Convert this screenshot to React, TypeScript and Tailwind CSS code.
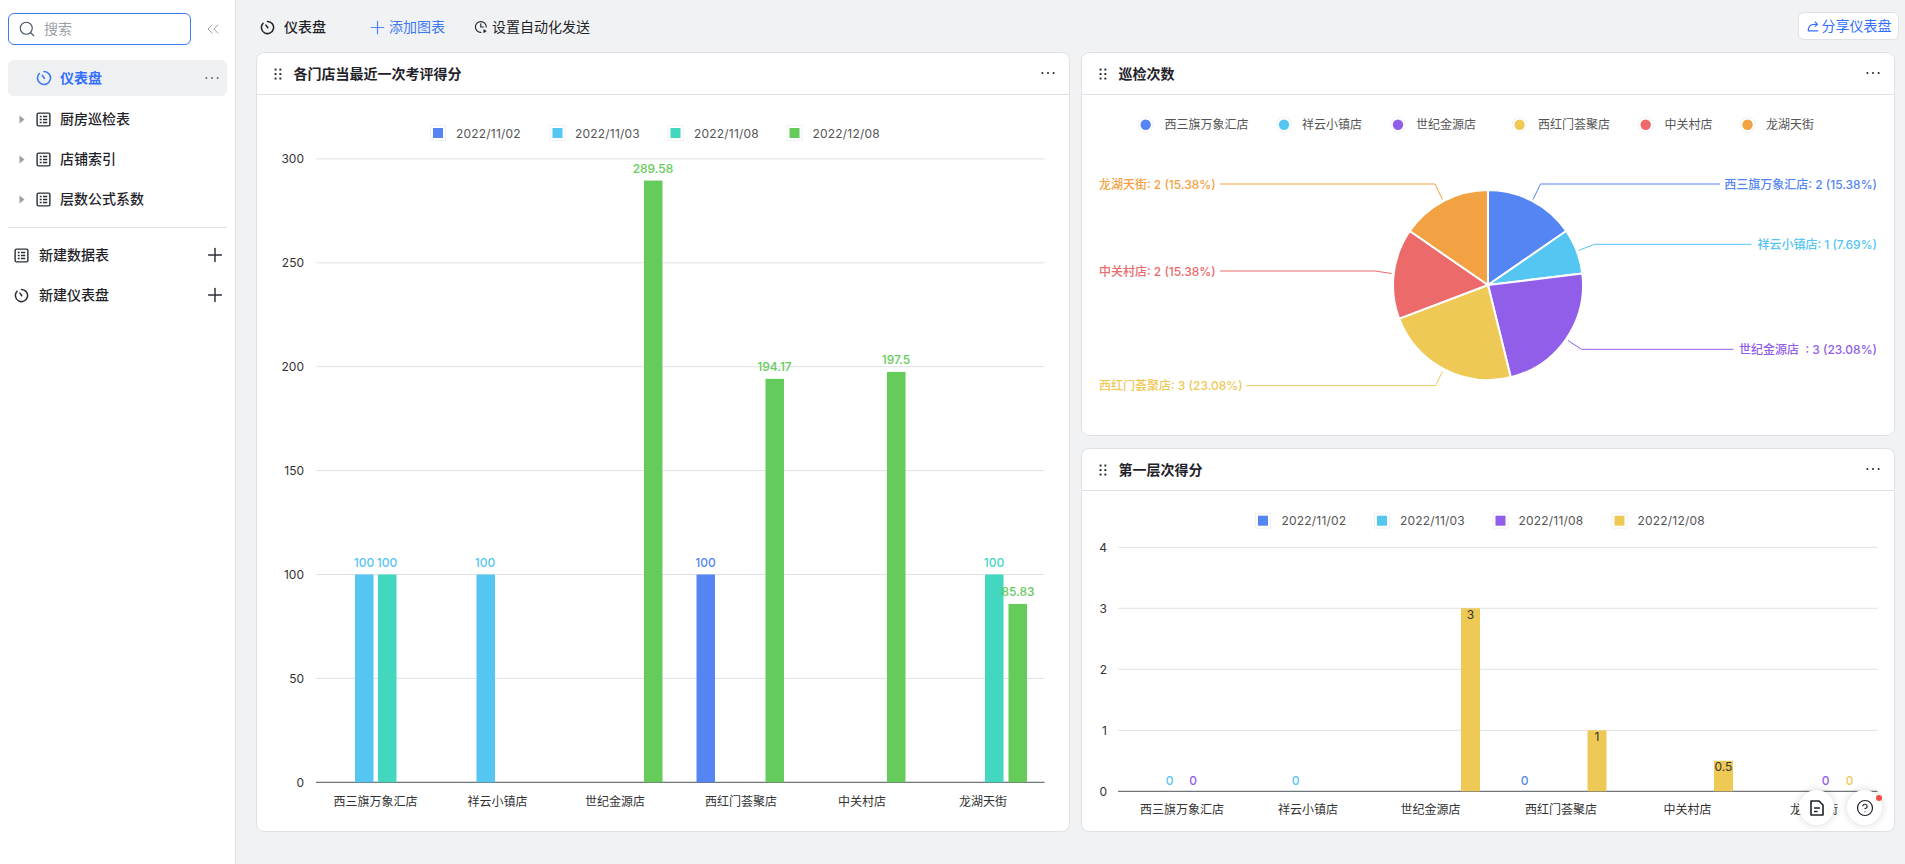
import { ChevronsLeft, CircleHelp, Plus, Search } from 'lucide-react';

const C = {
  blue: '#5585f2',
  cyan: '#55c5f2',
  teal: '#43d7bf',
  green: '#65cb5b',
  purple: '#905ee9',
  yellow: '#eec956',
  red: '#ec6a6a',
  orange: '#f3a243',
};

const LIGHT = '#dfe1e5';

function DashIcon({ className }: { className?: string }) {
  return (
    <svg viewBox="0 0 16 16" fill="none" stroke="currentColor" strokeWidth="1.6" strokeLinecap="round" className={className}>
      <path d="M8 1.5a6.5 6.5 0 1 1-4.7 2" />
      <path d="M8.3 8.3 6.3 5.4" />
    </svg>
  );
}

function TableIcon({ className }: { className?: string }) {
  return (
    <svg viewBox="0 0 16 16" fill="none" stroke="currentColor" className={className}>
      <rect x="1.2" y="1.2" width="13.6" height="13.6" rx="1.5" strokeWidth="1.5" />
      <path d="M4 4.9h2M7.5 4.9H12M4 8h2M7.5 8H12M4 11.1h2M7.5 11.1H12" strokeWidth="1.6" />
    </svg>
  );
}

function Caret() {
  return (
    <svg viewBox="0 0 6 9" className="w-[6px] h-[9px] text-[#9aa0a8]" fill="currentColor">
      <path d="M.5.5 5.5 4.5.5 8.5z" />
    </svg>
  );
}

function Dots({ className }: { className?: string }) {
  return (
    <svg viewBox="0 0 16 4" className={className} fill="currentColor">
      <circle cx="2.4" cy="2" r="1" />
      <circle cx="8" cy="2" r="1" />
      <circle cx="13.6" cy="2" r="1" />
    </svg>
  );
}

function Drag() {
  return (
    <svg viewBox="0 0 8 12" className="w-[8px] h-[12px] text-[#1f2329]" fill="currentColor">
      {[1.5, 6, 10.5].map((y) => (
        <g key={y}>
          <rect x="0.6" y={y - 0.9} width="1.9" height="1.9" />
          <rect x="5.4" y={y - 0.9} width="1.9" height="1.9" />
        </g>
      ))}
    </svg>
  );
}

function TreeRow({ label }: { label: string }) {
  return (
    <div className="h-9 mx-2 flex items-center">
      <div className="w-[28px] flex justify-end pr-[11px]"><Caret /></div>
      <TableIcon className="w-[15px] h-[15px] text-[#2b2f36]" />
      <span className="ml-[9px] text-sm font-medium text-[#1f2329]">{label}</span>
    </div>
  );
}

function NewRow({ label, icon }: { label: string; icon: React.ReactNode }) {
  return (
    <div className="h-9 mx-2 pl-[6px] pr-[1px] flex items-center">
      {icon}
      <span className="ml-[10px] text-sm font-medium text-[#1f2329]">{label}</span>
      <Plus className="ml-auto w-[22px] h-[22px] text-[#2b2f36]" strokeWidth={1.6} />
    </div>
  );
}

function Sidebar() {
  return (
    <aside className="w-[236px] shrink-0 bg-white border-r border-[#dfe1e5] flex flex-col">
      <div className="flex items-center mt-[13px] ml-2">
        <div className="w-[183px] h-[32px] rounded-md border border-[#3d78f5] flex items-center pl-[9px] gap-[8px]">
          <Search className="w-[18px] h-[18px] text-[#4e5969]" strokeWidth={1.5} />
          <span className="text-sm text-[#9aa0a8]">搜索</span>
        </div>
        <ChevronsLeft className="ml-[12px] w-[20px] h-[20px] text-[#9aa0a8]" strokeWidth={1.2} />
      </div>
      <div className="mt-[15px] flex flex-col gap-1">
        <div className="h-9 mx-2 mb-[1px] rounded-md bg-[#eff0f1] flex items-center pl-[28px] pr-[7px]">
          <DashIcon className="w-[16px] h-[16px] text-[#3d78f5]" />
          <span className="ml-[8px] text-sm font-semibold text-[#3370ff]">仪表盘</span>
          <Dots className="ml-auto w-[16px] h-[4px] text-[#646a73]" />
        </div>
        <TreeRow label="厨房巡检表" />
        <TreeRow label="店铺索引" />
        <TreeRow label="层数公式系数" />
      </div>
      <div className="mx-2 mt-[10px] mb-[9px] border-t border-[#dfe1e5]" />
      <div className="flex flex-col gap-1">
        <NewRow label="新建数据表" icon={<TableIcon className="w-[15px] h-[15px] text-[#2b2f36]" />} />
        <NewRow label="新建仪表盘" icon={<DashIcon className="w-[15px] h-[15px] text-[#2b2f36]" />} />
      </div>
    </aside>
  );
}

function Toolbar() {
  return (
    <div className="h-[52px] shrink-0 flex items-center pt-[2px] pl-[3px] text-sm">
      <DashIcon className="w-[15px] h-[15px] text-[#1f2329]" />
      <span className="ml-[9px] font-medium text-[#1f2329]">仪表盘</span>
      <Plus className="ml-[41px] w-[21px] h-[21px] text-[#4f86f7]" strokeWidth={1.4} />
      <span className="ml-[1px] text-[#3d78f5]">添加图表</span>
      <svg viewBox="0 0 16 16" fill="none" stroke="#1f2329" strokeWidth="1.3" strokeLinecap="round" className="ml-[29px] w-[14px] h-[14px]">
        <path d="M14 8a6.2 6.2 0 1 0-6.2 6.2" />
        <path d="M7.8 4.5V8h2.8" />
        <path d="M10.8 10.6 14.6 12.6 10.8 15z" fill="#1f2329" stroke="none" />
      </svg>
      <span className="ml-[4px] text-[#1f2329]">设置自动化发送</span>
      <button className="ml-auto mr-[-4px] mb-[2px] w-[101px] h-[28px] rounded-md border border-[#dfe1e5] bg-white flex items-center justify-center gap-[2px] text-[#3370ff]">
        <svg viewBox="0 0 16 16" fill="none" stroke="currentColor" strokeWidth="1.3" strokeLinecap="round" strokeLinejoin="round" className="w-[14px] h-[14px]">
          <path d="M13.5 13.5H2.5c.2-4.4 2.6-7.4 7-7.4h3.2" />
          <path d="M10.6 3.4l2.4 2.7-2.4 2.4" />
        </svg>
        分享仪表盘
      </button>
    </div>
  );
}

function Card({ title, children, className }: { title: string; children: React.ReactNode; className?: string }) {
  return (
    <section className={`bg-white border border-[#dfe1e5] rounded-lg flex flex-col overflow-hidden ${className ?? ''}`}>
      <header className="h-[42px] shrink-0 border-b border-[#dfe1e5] flex items-center pl-[16.5px] pr-[13px]">
        <Drag />
        <h3 className="ml-[12px] text-sm font-semibold text-[#1f2329]">{title}</h3>
        <Dots className="ml-auto w-[16px] h-[4px] text-[#1f2329] mb-[2px]" />
      </header>
      {children}
    </section>
  );
}

// chart helpers, coordinates are page pixels (the svg viewBox starts where the card body starts)
function T({ x, y, fill = '#333', anchor = 'middle', weight = 400, spacing, children }: { x: number; y: number; fill?: string; anchor?: 'start' | 'middle' | 'end'; weight?: number; spacing?: number; children: React.ReactNode }) {
  return (
    <text x={x} y={y} fill={fill} textAnchor={anchor} dominantBaseline="central" fontSize={12} fontWeight={weight} letterSpacing={spacing}>
      {children}
    </text>
  );
}

function Swatch({ x, y, color, label, tx }: { x: number; y: number; color: string; label: string; tx: number }) {
  return (
    <g>
      <rect x={x - 7.5} y={y - 7.5} width="15" height="15" fill="#fff" stroke="#f0f1f3" />
      <rect x={x - 5} y={y - 5} width="10" height="10" fill={color} />
      <T x={tx} y={y} fill="#555" anchor="start" spacing={0.2}>{label}</T>
    </g>
  );
}

const STORES = ['西三旗万象汇店', '祥云小镇店', '世纪金源店', '西红门荟聚店', '中关村店', '龙湖天街'];

function ScoreChart() {
  const y0 = 782.3;
  const perUnit = 103.9 / 50;
  const bars = [
    { x: 355, v: 100, c: C.cyan, lx: 364 },
    { x: 378, v: 100, c: C.teal, lx: 387, lc: C.cyan },
    { x: 476.5, v: 100, c: C.cyan, lx: 485 },
    { x: 644, v: 289.58, c: C.green, lx: 653 },
    { x: 696.5, v: 100, c: C.blue, lx: 705.5 },
    { x: 765.5, v: 194.17, c: C.green, lx: 774.5 },
    { x: 887, v: 197.5, c: C.green, lx: 896 },
    { x: 985, v: 100, c: C.teal, lx: 994 },
    { x: 1008.5, v: 85.83, c: C.green, lx: 1018 },
  ];
  const xs = [375.5, 497.5, 615, 741, 862, 983];
  return (
    <svg viewBox="257 95 812 736" className="block w-full h-[736px]">
      <Swatch x={438} y={133} color={C.blue} label="2022/11/02" tx={456} />
      <Swatch x={557.5} y={133} color={C.cyan} label="2022/11/03" tx={575} />
      <Swatch x={675.5} y={133} color={C.teal} label="2022/11/08" tx={694} />
      <Swatch x={794.5} y={133} color={C.green} label="2022/12/08" tx={812.5} />
      {[0, 50, 100, 150, 200, 250, 300].map((v) => {
        const y = y0 - v * perUnit;
        return (
          <g key={v}>
            <line x1="316" x2="1044.5" y1={y} y2={y} stroke={v === 0 ? '#4e5358' : LIGHT} />
            <T x={304} y={y} anchor="end">{v}</T>
          </g>
        );
      })}
      {bars.map((b) => {
        const top = y0 - b.v * perUnit;
        return (
          <g key={b.x}>
            <rect x={b.x} y={top} width="18.5" height={y0 - top} fill={b.c} />
            <T x={b.lx} y={top - 12} fill={b.lc ?? b.c} weight={500}>{b.v}</T>
          </g>
        );
      })}
      {STORES.map((s, i) => (
        <T key={s} x={xs[i]} y={801}>{s}</T>
      ))}
    </svg>
  );
}

function wedge(cx: number, cy: number, r: number, a0: number, a1: number) {
  const pt = (a: number) => [cx + r * Math.sin(a), cy - r * Math.cos(a)];
  const [x0, y0] = pt(a0);
  const [x1, y1] = pt(a1);
  return `M${cx} ${cy}L${x0} ${y0}A${r} ${r} 0 ${a1 - a0 > Math.PI ? 1 : 0} 1 ${x1} ${y1}Z`;
}

function PieChart() {
  const slices = [
    { v: 2, c: C.blue },
    { v: 1, c: C.cyan },
    { v: 3, c: C.purple },
    { v: 3, c: C.yellow },
    { v: 2, c: C.red },
    { v: 2, c: C.orange },
  ];
  let acc = 0;
  const legend = [
    [1145.7, 1164.5],
    [1284, 1302],
    [1398, 1416],
    [1519.6, 1538],
    [1645.7, 1664.5],
    [1747.5, 1766],
  ];
  const labels = [
    { c: C.blue, line: '1533,199.5 1540.5,184 1720,184', t: '西三旗万象汇店: 2 (15.38%)', x: 1877, y: 184, a: 'end' as const },
    { c: C.cyan, line: '1578.5,250.5 1594.5,244.3 1751.5,244.3', t: '祥云小镇店: 1 (7.69%)', x: 1877, y: 244.3, a: 'end' as const },
    { c: C.purple, line: '1568,340.5 1581.5,349.3 1733.5,349.3', t: '世纪金源店\u00a0\u00a0: 3 (23.08%)', x: 1877, y: 349.3, a: 'end' as const },
    { c: C.yellow, line: '1442.5,371.5 1435.5,385.7 1246,385.7', t: '西红门荟聚店: 3 (23.08%)', x: 1099, y: 385.7, a: 'start' as const },
    { c: C.red, line: '1391.5,273.5 1375,271 1220,271', t: '中关村店: 2 (15.38%)', x: 1099, y: 271, a: 'start' as const },
    { c: C.orange, line: '1442.5,199.5 1435,184 1220,184', t: '龙湖天街: 2 (15.38%)', x: 1099, y: 184, a: 'start' as const },
  ];
  return (
    <svg viewBox="1082 95 812 340" className="block w-full h-[340px]">
      {STORES.map((s, i) => (
        <g key={s}>
          <circle cx={legend[i][0]} cy="124.7" r="7.5" fill="#fff" stroke="#f0f1f3" />
          <circle cx={legend[i][0]} cy="124.7" r="5.2" fill={slices[i].c} />
          <T x={legend[i][1]} y={124.7} fill="#555" anchor="start">{s}</T>
        </g>
      ))}
      {labels.map((l) => (
        <g key={l.t}>
          <polyline points={l.line} fill="none" stroke={l.c} />
          <T x={l.x} y={l.y} fill={l.c} anchor={l.a} weight={500}>{l.t}</T>
        </g>
      ))}
      {slices.map((s) => {
        const a0 = (acc / 13) * Math.PI * 2;
        acc += s.v;
        const a1 = (acc / 13) * Math.PI * 2;
        return <path key={s.c} d={wedge(1488, 285, 95, a0, a1)} fill={s.c} stroke="#fff" strokeWidth="2" strokeLinejoin="round" />;
      })}
    </svg>
  );
}

function FloorChart() {
  const y0 = 791.3;
  const zeros = [
    [1169.5, C.cyan],
    [1193, C.purple],
    [1295.5, C.cyan],
    [1524.5, C.blue],
    [1825.5, C.purple],
    [1849.5, C.yellow],
  ] as const;
  const bars = [
    { x: 1461, v: 3 },
    { x: 1587.5, v: 1 },
    { x: 1714, v: 0.5 },
  ];
  const xs = [1182, 1308, 1430.5, 1561, 1687.5, 1814];
  return (
    <svg viewBox="1082 491 812 340" className="block w-full h-[340px]">
      <Swatch x={1263} y={520.7} color={C.blue} label="2022/11/02" tx={1281.5} />
      <Swatch x={1382} y={520.7} color={C.cyan} label="2022/11/03" tx={1400} />
      <Swatch x={1500.5} y={520.7} color={C.purple} label="2022/11/08" tx={1518.5} />
      <Swatch x={1619.5} y={520.7} color={C.yellow} label="2022/12/08" tx={1637.5} />
      {[0, 1, 2, 3, 4].map((v) => {
        const y = y0 - v * 61;
        return (
          <g key={v}>
            <line x1="1118" x2="1877.5" y1={y} y2={y} stroke={v === 0 ? '#4e5358' : LIGHT} />
            <T x={1107} y={y} anchor="end">{v}</T>
          </g>
        );
      })}
      {bars.map((b) => {
        const top = y0 - b.v * 61;
        return (
          <g key={b.x}>
            <rect x={b.x} y={top} width="19" height={y0 - top} fill={C.yellow} />
            <T x={b.x + 9.5} y={top + 6}>{b.v}</T>
          </g>
        );
      })}
      {zeros.map(([x, c]) => (
        <T key={x} x={x} y={780} fill={c} weight={500}>0</T>
      ))}
      {STORES.map((s, i) => (
        <T key={s} x={xs[i]} y={809.3}>{s}</T>
      ))}
    </svg>
  );
}

export default function App() {
  return (
    <div className="relative h-screen w-full overflow-hidden flex bg-[#f1f2f4] [font-family:Inter,'Noto_Sans_CJK_SC',sans-serif]">
      <Sidebar />
      <main className="flex-1 min-w-0 flex flex-col pl-[21px] pr-[10px]">
        <Toolbar />
        <div className="ml-[-1px] h-[780px] grid grid-cols-2 grid-rows-2 gap-x-[11px] gap-y-[12px]">
          <Card title="各门店当最近一次考评得分" className="row-span-2">
            <ScoreChart />
          </Card>
          <Card title="巡检次数">
            <PieChart />
          </Card>
          <Card title="第一层次得分">
            <FloorChart />
          </Card>
        </div>
      </main>
      {/* floating help buttons */}
      <div className="absolute right-[23px] top-[790px] flex gap-[13px]">
        <div className="w-[35px] h-[35px] rounded-full bg-white shadow-[0_0_8px_rgba(0,0,0,0.16)] flex items-center justify-center">
          <svg viewBox="0 0 14 16" fill="none" stroke="#1f2329" strokeWidth="1.6" strokeLinejoin="round" className="w-[14px] h-[16px]">
            <path d="M1 1H9l4 4v10H1z" />
            <path d="M4 8h6M4 11.5h3.5" />
          </svg>
        </div>
        <div className="relative w-[35px] h-[35px] rounded-full bg-white shadow-[0_0_8px_rgba(0,0,0,0.16)] flex items-center justify-center">
          <CircleHelp className="w-[18px] h-[18px] text-[#1f2329]" strokeWidth={1.6} />
          <span className="absolute right-[0px] top-[5px] w-[6px] h-[6px] rounded-full bg-[#f54a45]" />
        </div>
      </div>
    </div>
  );
}
